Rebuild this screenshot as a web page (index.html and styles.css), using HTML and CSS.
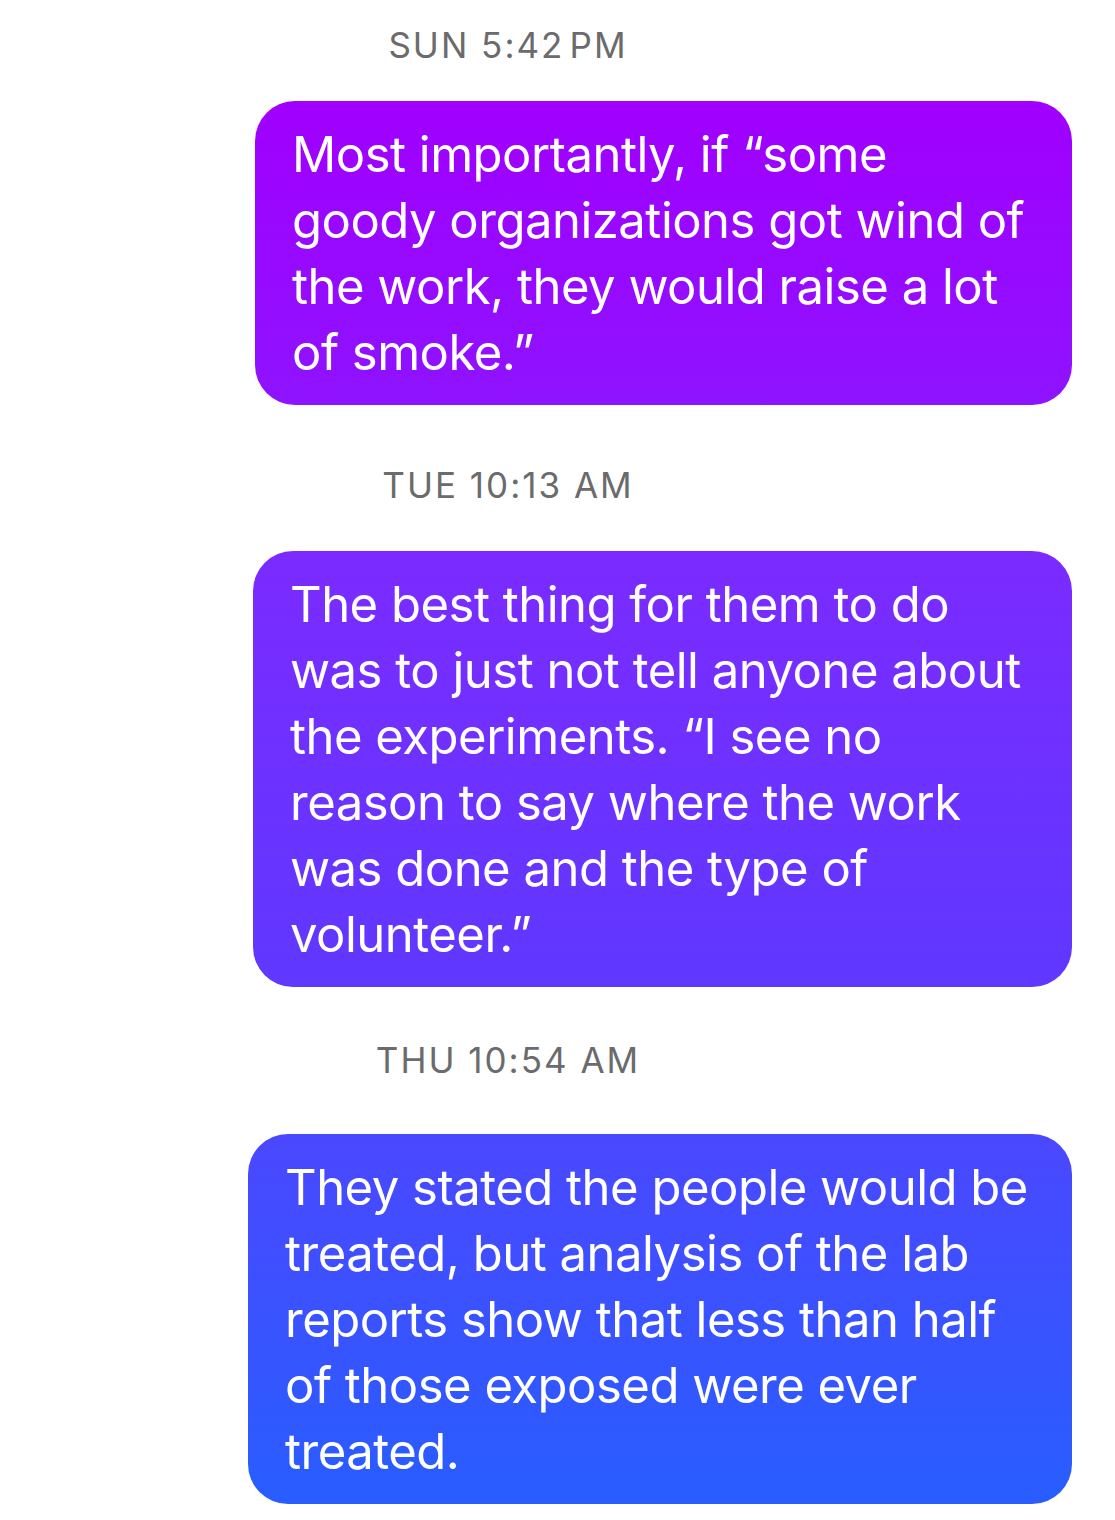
FILE: index.html
```html
<!DOCTYPE html>
<html lang="en">
<head>
    <meta charset="UTF-8">
    <meta name="viewport" content="width=device-width, initial-scale=1.0">
    <title>Messages</title>
    <link rel="stylesheet" href="styles.css">
</head>
<body>
    <div class="thread">
        <div class="stamp stamp-first">SUN 5:42&#8202;PM</div>
        <div class="bubble bubble-one">
            Most importantly, if “some<br>
            goody organizations got wind of<br>
            the work, they would raise a lot<br>
            of smoke.”
        </div>

        <div class="stamp stamp-second">TUE 10:13 AM</div>
        <div class="bubble bubble-two">
            The best thing for them to do<br>
            was to just not tell anyone about<br>
            the experiments. “I see no<br>
            reason to say where the work<br>
            was done and the type of<br>
            volunteer.”
        </div>

        <div class="stamp stamp-third">THU 10:54 AM</div>
        <div class="bubble bubble-three">
            They stated the people would be<br>
            treated, but analysis of the lab<br>
            reports show that less than half<br>
            of those exposed were ever<br>
            treated.
        </div>
    </div>
</body>
</html>
```

FILE: styles.css
```css
body {
    margin: 0;
    background: #ffffff;
    font-family: Inter, "Open Sans", "Liberation Sans", sans-serif;
}

.thread {
    display: flex;
    flex-direction: column;
    padding: 25px 43px 0 0;
}

.stamp {
    height: 40px;
    line-height: 40px;
    font-size: 35px;
    color: #6b6b6d;
    text-align: center;
    padding-left: 45px;
    margin-right: 101px;
    letter-spacing: 2px;
}

.stamp-second {
    margin-top: 60px;
}

.stamp-third {
    margin-top: 53px;
}

.bubble {
    align-self: flex-end;
    box-sizing: border-box;
    padding: 21px 20px 19px 37px;
    border-radius: 40px;
    color: #ffffff;
    font-size: 49px;
    line-height: 66px;
    letter-spacing: -0.5px;
    white-space: nowrap;
    /* one gradient across the whole screen, like iMessage */
    background: linear-gradient(to bottom,
        #a800ff 0px,
        #a000ff 110px,
        #8f12ff 390px,
        #7b2bff 560px,
        #6038ff 980px,
        #4a48ff 1140px,
        #2a5cff 1480px,
        #285eff 1520px);
    background-attachment: fixed;
}

.bubble-one {
    width: 817px;
    margin-top: 36px;
}

.bubble-two {
    width: 819px;
    margin-top: 46px;
}

.bubble-three {
    width: 824px;
    margin-top: 54px;
}
```
